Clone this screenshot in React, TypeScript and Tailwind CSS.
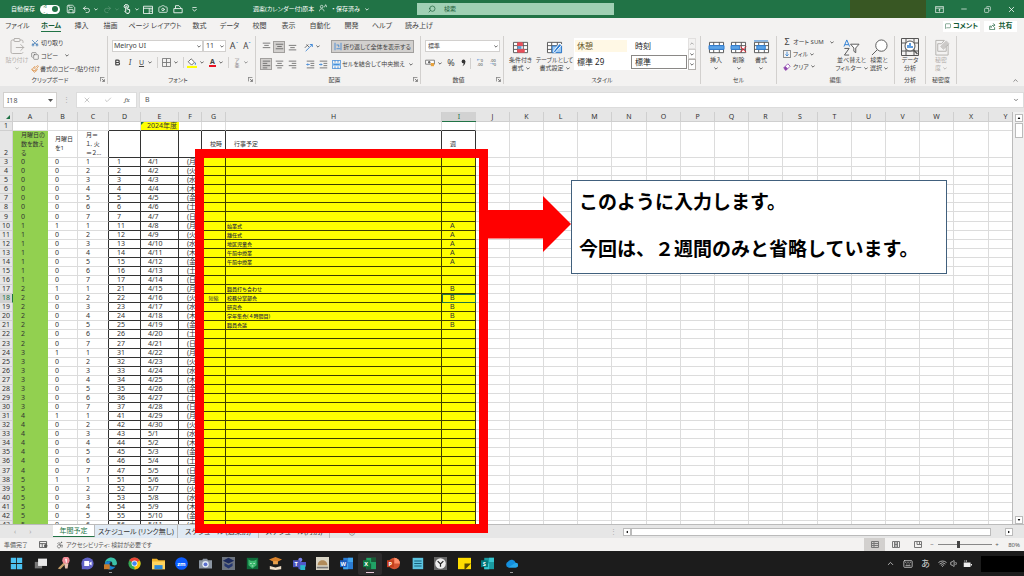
import React from "react";
import {
  Accessibility,
  Bold,
  Camera,
  ChevronDown,
  ChevronUp,
  ClipboardPaste,
  Copy,
  Keyboard,
  MessageSquare,
  Minus,
  Paintbrush,
  Printer,
  Redo2,
  Save,
  Scissors,
  Search,
  Share2,
  Table2,
  Undo2,
  Volume1,
  Wifi,
  X,
  Check,
  Copy as Restore,
} from "lucide-react";

type Kids = { children?: React.ReactNode };

const Caret = ({ className = "" }: { className?: string }) => (
  <svg viewBox="0 0 6 4" className={`h-[3px] w-[4px] shrink-0 ${className}`} aria-hidden="true">
    <path d="M0.5 0.5 3 3 5.5 0.5" fill="none" stroke="currentColor" strokeWidth="1.2" />
  </svg>
);

const IconButton = ({ label, className = "", children }: Kids & { label: string; className?: string }) => (
  <button type="button" aria-label={label} className={`flex shrink-0 items-center justify-center ${className}`}>
    {children}
  </button>
);

/* ---------- title bar ---------- */

function TitleBar() {
  return (
    <header className="flex h-[18px] shrink-0 items-center bg-[#217346] text-[6px] leading-[8px] text-white">
      <label className="flex items-center gap-[5px] pl-[11px]">
        自動保存
        <input type="checkbox" defaultChecked className="peer sr-only" />
        <span className="flex h-[9px] w-[20px] items-center justify-between rounded-full bg-white pr-[2px] pl-[3px] text-[5px] text-[#217346]">
          オン
          <span className="size-[6px] rounded-full bg-[#217346]" />
        </span>
      </label>
      <div className="flex items-center pl-[6px]">
        <IconButton label="上書き保存" className="w-[10px]"><Save size={10} strokeWidth={1.8} /></IconButton>
        <IconButton label="元に戻す" className="ml-[5px] w-[18px] gap-[3px]"><Undo2 size={9} strokeWidth={2} /><Caret /></IconButton>
        <IconButton label="やり直し" className="ml-[3px] w-[18px] gap-[3px] opacity-25"><Redo2 size={9} strokeWidth={2} /><Caret /></IconButton>
        <IconButton label="タッチ/マウス モード" className="ml-[1px] w-[18px] gap-[3px]">
          <svg viewBox="0 0 16 16" className="size-[10px]" fill="none" stroke="currentColor" strokeWidth="1.6">
            <path d="M4 6a3.5 3.5 0 1 1 6 0M6 12V4.5a1 1 0 0 1 2.200 0V8l4 1v3l-1.500 3H7.500L4 11" />
          </svg>
          <Caret />
        </IconButton>
        <IconButton label="テーブル" className="ml-[3px] w-[11px]">
          <svg viewBox="0 0 12 11" className="h-[9px] w-[10px]" fill="none" stroke="currentColor">
            <path d="M.5 1.500h11v9H.5zM.5 4h11M7.500 4v6.500M9 6h1.500M9 8h1.500" />
          </svg>
        </IconButton>
        <IconButton label="カメラ" className="ml-[4px] w-[11px]"><Camera size={10} strokeWidth={1.8} /></IconButton>
        <IconButton label="印刷" className="ml-[4px] w-[11px]">
          <svg viewBox="0 0 12 12" className="size-[10px]" fill="none" stroke="currentColor">
            <path d="M1 5.500h10v5H1zM3 5.500V2h4l2 2v1.500" />
          </svg>
        </IconButton>
        <IconButton label="クイック アクセス ツール バーのカスタマイズ" className="ml-[8px] w-[6px]">
          <svg viewBox="0 0 6 6" className="size-[5px]"><path d="M0.500 0.500h5M0.500 2.500 3 5l2.500-2.500" fill="none" stroke="currentColor" /></svg>
        </IconButton>
      </div>
      <button type="button" className="ml-[54px] flex w-[166px] items-center gap-[5px] pl-[2px] whitespace-nowrap">
        週案(カレンダー付)原本
        <svg viewBox="0 0 12 12" className="-mt-[3px] size-[8px]" fill="none" stroke="currentColor">
          <circle cx="4" cy="4" r="2" /><path d="M0.500 11c0-5 7-5 7 0M8 5l2-4 2 4" />
        </svg>
        <span>• 保存済み</span>
        <Caret />
      </button>
      <label className="flex h-[12px] w-[197px] shrink-0 items-center bg-[#a0d0b4] pl-[11px] text-[#185c37]">
        <Search size={8} strokeWidth={2} className="shrink-0 -scale-x-100" />
        <input type="search" placeholder="検索" aria-label="検索" className="ml-[8px] w-full bg-transparent text-[6px] outline-none placeholder:text-[#185c37]" />
      </label>
      <div className="flex h-full flex-1 items-center justify-end">
        <div className="h-full w-[76px] bg-[#385723]" />
        <div className="flex items-center gap-[15px] pr-[8px] pl-[9px]">
          <IconButton label="リボンの表示オプション" className="w-[9px]">
            <svg viewBox="0 0 12 10" className="h-[7px] w-[9px]" fill="none" stroke="currentColor"><path d="M.5.5h11v9H.5zM.5 3h11M6 8V4.500M4.500 6 6 4.500 7.500 6" /></svg>
          </IconButton>
          <IconButton label="最小化" className="w-[9px]"><Minus size={8} /></IconButton>
          <IconButton label="元に戻す(縮小)" className="w-[9px]"><Restore size={7} className="-scale-x-100" /></IconButton>
          <IconButton label="閉じる" className="w-[9px]"><X size={9} /></IconButton>
        </div>
      </div>
    </header>
  );
}

/* ---------- ribbon tabs ---------- */

const ribbonTabs = [
  { name: "ファイル", width: "w-[35px]" },
  { name: "ホーム", width: "w-[32px]" },
  { name: "挿入", width: "w-[29px]" },
  { name: "描画", width: "w-[29px]" },
  { name: "ページ レイアウト", width: "w-[60px]" },
  { name: "数式", width: "w-[29px]" },
  { name: "データ", width: "w-[31px]" },
  { name: "校閲", width: "w-[29px]" },
  { name: "表示", width: "w-[29px]" },
  { name: "自動化", width: "w-[34px]" },
  { name: "開発", width: "w-[29px]" },
  { name: "ヘルプ", width: "w-[32px]" },
  { name: "読み上げ", width: "w-[42px]" },
];

function RibbonTabs() {
  return (
    <nav className="flex h-[16px] shrink-0 items-center bg-[#f3f2f1] text-[7px] leading-[10px] text-[#444]">
      {ribbonTabs.map((t) => (
        <button
          type="button"
          key={t.name}
          className={`flex shrink-0 justify-center whitespace-nowrap ${t.width} ${t.name === "ホーム" ? "font-bold" : ""}`}
        >
          <span className={t.name === "ホーム" ? "border-b border-[#217346] text-[#185c37]" : "border-b border-transparent"}>{t.name}</span>
        </button>
      ))}
      <div className="ml-auto flex gap-[4px] pr-[7px] font-bold text-[#185c37]">
        <button type="button" className="flex h-[11px] w-[37px] items-center justify-center gap-[2px] bg-white whitespace-nowrap">
          <MessageSquare size={6} />コメント
        </button>
        <button type="button" className="flex h-[11px] w-[33px] items-center justify-center gap-[3px] bg-white whitespace-nowrap">
          <svg viewBox="0 0 10 10" className="size-[7px]" fill="none" stroke="currentColor"><path d="M3 4.500H1v5h7V6M3 7c0-3 2-4 5-4M6 .5 8.500 3 6 5.500" /></svg>共有
        </button>
      </div>
    </nav>
  );
}

/* ---------- ribbon ---------- */

function Group({ title, width, launcher, children }: Kids & { title: string; width: string; launcher?: boolean }) {
  return (
    <section className={`flex shrink-0 flex-col py-[2px] ${width}`}>
      <div className="flex flex-1 flex-col border-r border-[#d2d0ce]">
        <div className="flex h-[39px] items-start">{children}</div>
        <div className="flex h-[9px] items-center">
          <h2 className="flex-1 text-center whitespace-nowrap">{title}</h2>
          {launcher && (
            <IconButton label={`${title}の設定`} className="mr-[2px]">
              <svg viewBox="0 0 8 8" className="size-[5px]" fill="none" stroke="currentColor"><path d="M.5 7V.5H7M3 3l4 4M7 3.500V7H3.500" /></svg>
            </IconButton>
          )}
        </div>
      </div>
    </section>
  );
}

function Big({ lines, width, icon, dim }: { lines: string[]; width: string; icon: React.ReactNode; dim?: boolean }) {
  return (
    <button type="button" className={`flex shrink-0 flex-col items-center pt-[2px] whitespace-nowrap ${width} ${dim ? "text-[#b3b0ad]" : ""}`}>
      <span className="flex h-[18px] items-center">{icon}</span>
      {lines.map((l) => (
        <span key={l} className="flex h-[8px] items-center gap-[2px]">
          {l.replace("▾", "")}
          {l.includes("▾") && <Caret />}
        </span>
      ))}
    </button>
  );
}

const GridIcon = ({ children }: Kids) => (
  <svg viewBox="0 0 18 16" className="h-[15px] w-[17px]" fill="none" stroke="#555">
    <path d="M1.500 2.500h15v11h-15zM1.500 6h15M1.500 10h15M6 2.500v11M12 2.500v11" fill="#fff" />
    {children}
  </svg>
);

const Lines = ({ kind }: { kind: "top" | "mid" | "low" | "left" | "center" | "right" | "out" | "in" }) => {
  const d = {
    top: "M1 1.500h10M3 4.500h6M1 7.500h10",
    mid: "M1 3h10M3 6h6M1 9h10",
    low: "M1 4.500h10M3 7.500h6M1 10.500h10",
    left: "M1 1.500h10M1 4.500h6M1 7.500h10M1 10.500h6",
    center: "M1 1.500h10M3 4.500h6M1 7.500h10M3 10.500h6",
    right: "M1 1.500h10M5 4.500h6M1 7.500h10M5 10.500h6",
    out: "M1 1.500h10M6 4.500h5M6 7.500h5M1 10.500h10",
    in: "M1 1.500h10M6 4.500h5M6 7.500h5M1 10.500h10",
  }[kind];
  return (
    <svg viewBox="0 0 12 12" className="size-[9px]" fill="none" stroke="#555">
      <path d={d} />
      {kind === "out" && <path d="M5 6H1M2.500 4.500 1 6l1.500 1.500" stroke="#2b7cd3" />}
      {kind === "in" && <path d="M0 6h4M2.500 4.500 4 6 2.500 7.500" stroke="#2b7cd3" />}
    </svg>
  );
};

function Clipboard() {
  return (
    <Group title="クリップボード" width="w-[108px]" launcher>
      <button type="button" className="flex w-[31px] flex-col items-center pt-[1px] pl-[3px] text-[#b3b0ad]">
        <ClipboardPaste size={18} strokeWidth={1.3} />
        <span className="mt-[1px] whitespace-nowrap">貼り付け</span>
        <Caret className="mt-[3px]" />
      </button>
      <div className="flex flex-col pt-[1px]">
        <button type="button" className="flex h-[12px] items-center gap-[2px]"><Scissors size={8} className="-rotate-90 text-[#2b6cb0]" />切り取り</button>
        <button type="button" className="flex h-[13px] items-center gap-[2px]"><Copy size={8} strokeWidth={1.5} />コピー<Caret className="ml-[5px]" /></button>
        <button type="button" className="flex h-[13px] items-center gap-[1px] whitespace-nowrap"><Paintbrush size={8} className="text-[#d9822b]" />書式のコピー/貼り付け</button>
      </div>
    </Group>
  );
}

function FontGroup() {
  return (
    <Group title="フォント" width="w-[148px]" launcher>
      <div className="w-full pl-[4px]">
        <div className="flex items-center pt-[4px]">
          <div className="relative h-[12px] w-[91px]">
            <select aria-label="フォント" className="size-full appearance-none border border-[#d2d0ce] bg-white pl-[1px] text-[7px] leading-[10px]"><option>Meiryo UI</option></select>
            <Caret className="absolute top-[5px] right-[2px]" />
          </div>
          <div className="relative h-[12px] w-[23px]">
            <select aria-label="フォント サイズ" className="size-full appearance-none border border-[#d2d0ce] bg-white pl-[2px] text-[7px] leading-[10px]"><option>11</option></select>
            <Caret className="absolute top-[5px] right-[2px]" />
          </div>
          <IconButton label="フォント サイズの拡大" className="ml-[3px] w-[10px] text-[9px] leading-[10px]">A<span className="-mt-[4px] text-[6px] text-[#2b7cd3]">ˆ</span></IconButton>
          <IconButton label="フォント サイズの縮小" className="ml-[3px] w-[10px] text-[8px] leading-[10px]">A<span className="-mt-[4px] text-[6px] text-[#2b7cd3]">ˇ</span></IconButton>
        </div>
        <div className="flex items-center pt-[5px]">
          <IconButton label="太字" className="w-[10px]"><Bold size={7} strokeWidth={4} /></IconButton>
          <IconButton label="斜体" className="ml-[3px] w-[10px] font-serif text-[8px] leading-[10px] italic">I</IconButton>
          <IconButton label="下線" className="ml-[3px] w-[15px] gap-[4px] text-[7px] leading-[10px]"><span className="underline">U</span><Caret /></IconButton>
          <span className="ml-[4px] h-[11px] w-px bg-[#d2d0ce]" />
          <IconButton label="罫線" className="ml-[3px] w-[18px] gap-[3px]">
            <svg viewBox="0 0 10 10" className="size-[9px]" fill="none" stroke="#777"><path d="M.5.5h9v9h-9zM5 .5v9M.5 5h9" /></svg><Caret />
          </IconButton>
          <span className="ml-[4px] h-[11px] w-px bg-[#d2d0ce]" />
          <IconButton label="塗りつぶしの色" className="ml-[2px] w-[18px] gap-[3px]">
            <svg viewBox="0 0 12 12" className="size-[10px]"><path d="m5 1 4 4-3.500 3.500-4-4z" fill="#fff" stroke="#555" /><path d="M10 5c1 2 1 3 0 3s-1-1 0-3" fill="#2b7cd3" /><path d="M0 9.500h12V12H0z" fill="#ff0" /></svg><Caret />
          </IconButton>
          <IconButton label="フォントの色" className="ml-[3px] w-[18px] gap-[3px]">
            <span className="border-b-2 border-[#e81123] px-[1px] text-[7px] leading-[7px] font-bold">A</span><Caret />
          </IconButton>
          <span className="ml-[3px] h-[11px] w-px bg-[#d2d0ce]" />
          <IconButton label="ふりがなの表示" className="ml-[3px] w-[18px] gap-[4px] text-[#777]">
            <span className="text-[5px] leading-[5px]">ア<br />亜</span><Caret />
          </IconButton>
        </div>
      </div>
    </Group>
  );
}

function AlignGroup() {
  const on = "h-[12px] w-[12px] border border-[#a19f9d] bg-[#d2d0ce]";
  const off = "h-[12px] w-[12px]";
  return (
    <Group title="配置" width="w-[165px]" launcher>
      <div className="grid grid-cols-[71px_1fr] gap-y-[5px] pt-[4px] pl-[4px]">
        <div className="flex items-center gap-[1px]">
          <IconButton label="上揃え" className={off}><Lines kind="top" /></IconButton>
          <IconButton label="上下中央揃え" className={on}><Lines kind="mid" /></IconButton>
          <IconButton label="下揃え" className={off}><Lines kind="low" /></IconButton>
          <IconButton label="方向" className="ml-[5px] gap-[2px]">
            <svg viewBox="0 0 12 12" className="size-[10px]" fill="none" stroke="#555"><path d="m2 11 8-8M7 3h3v3" stroke="#2b7cd3" /><path d="m1 7 4-4M3 3l3 3" /></svg><Caret />
          </IconButton>
        </div>
        <button type="button" className="flex h-[13px] w-[83px] items-center justify-center gap-[1px] border border-[#a19f9d] bg-[#d2d0ce] whitespace-nowrap">
          <svg viewBox="0 0 10 12" className="h-[9px] w-[8px]" fill="none" stroke="#2b7cd3"><path d="M1 1v10M3 4h3v3M9 1v10M3 9h5" /></svg>
          折り返して全体を表示する
        </button>
        <div className="flex items-center gap-[1px]">
          <IconButton label="左揃え" className={on}><Lines kind="left" /></IconButton>
          <IconButton label="中央揃え" className={off}><Lines kind="center" /></IconButton>
          <IconButton label="右揃え" className={off}><Lines kind="right" /></IconButton>
          <IconButton label="インデントを減らす" className="ml-[5px] w-[12px]"><Lines kind="out" /></IconButton>
          <IconButton label="インデントを増やす" className="w-[12px]"><Lines kind="in" /></IconButton>
        </div>
        <button type="button" className="flex h-[12px] items-center gap-[1px] pl-[1px] whitespace-nowrap">
          <svg viewBox="0 0 12 12" className="size-[9px]" fill="none" stroke="#2b7cd3"><path d="M.5.5h11v11H.5z" /><path d="M1 4h10v4H1z" fill="#9dc8f0" stroke="none" /><path d="M4 .5v3M8 .5v3M4 8.500v3M8 8.500v3M2 6h8" /></svg>
          セルを結合して中央揃え<Caret className="ml-[3px]" />
        </button>
      </div>
    </Group>
  );
}

function NumberGroup() {
  return (
    <Group title="数値" width="w-[83px]" launcher>
      <div className="w-full pt-[4px] pl-[4px]">
        <div className="relative h-[12px] w-[75px]">
          <select aria-label="表示形式" className="size-full appearance-none border border-[#d2d0ce] bg-white pl-[2px] text-[6px] leading-[10px]"><option>標準</option></select>
          <Caret className="absolute top-[5px] right-[2px]" />
        </div>
        <div className="flex items-center pt-[5px]">
          <IconButton label="通貨表示形式" className="h-[12px] w-[17px] gap-[3px]">
            <svg viewBox="0 0 12 10" className="h-[8px] w-[10px]"><path d="M.5 1.500h11v5H.5z" fill="#fff" stroke="#666" /><circle cx="5" cy="4" r="1.500" fill="#666" /><path d="M7 5h4v4H7z" fill="#e8a33d" /></svg><Caret />
          </IconButton>
          <IconButton label="パーセント" className="ml-[4px] w-[10px] text-[9px] leading-[10px]">%</IconButton>
          <IconButton label="桁区切り" className="ml-[3px] w-[9px]">
            <svg viewBox="0 0 6 10" className="h-[8px] w-[5px]"><circle cx="3" cy="3" r="2.300" fill="#333" /><path d="M5.300 3C5.300 6 4 8 1.500 9 3 7 3.500 6 3 4z" fill="#333" /></svg>
          </IconButton>
          <span className="ml-[2px] h-[11px] w-px bg-[#d2d0ce]" />
          <IconButton label="小数点以下の表示桁数を増やす" className="ml-[4px] w-[10px] text-[4px] leading-[4px]"><span><span className="text-[#2b7cd3]">←</span>0<br />.00</span></IconButton>
          <IconButton label="小数点以下の表示桁数を減らす" className="ml-[3px] w-[10px] text-[4px] leading-[4px]"><span>.00<br /><span className="text-[#2b7cd3]">→</span>0</span></IconButton>
        </div>
      </div>
    </Group>
  );
}

function StyleGroup() {
  return (
    <Group title="スタイル" width="w-[197px]">
      <Big lines={["条件付き", "書式▾"]} width="w-[33px]" icon={
        <GridIcon><path d="M6 3h5v3H6zM6 10h7v3H6z" fill="#e8505b" stroke="#e8505b" /><path d="M6 6.500h4v3H6z" fill="#5b9bd5" stroke="none" /></GridIcon>} />
      <Big lines={["テーブルとして", "書式設定▾"]} width="w-[35px]" icon={
        <GridIcon><path d="M6.500 6.500h10v7h-10z" fill="#9dc8f0" stroke="#2b7cd3" /><path d="m9 14 8-9-3-1-6 8z" fill="#2b7cd3" stroke="#fff" /></GridIcon>} />
      <div className="mt-[2px] ml-[2px] flex h-[32px] text-[8px] leading-[10px] text-[#222]">
        <div className="grid w-[114px] grid-cols-2 items-center bg-white pr-[1px] pl-[1px]">
          <button type="button" className="mr-[4px] h-[12px] bg-[#fff8e5] pl-[2px] text-left text-[#6b5a2a]">休憩</button>
          <button type="button" className="h-[12px] pl-[4px] text-left">時刻</button>
          <button type="button" className="h-[12px] pl-[2px] text-left">標準 29</button>
          <button type="button" className="h-[14px] border border-[#8a8886] pl-[3px] text-left">標準</button>
        </div>
        <div className="flex w-[8px] flex-col text-[#444]">
          <IconButton label="前のスタイル" className="flex-1 border border-[#d2d0ce] opacity-50"><Caret className="-scale-y-100" /></IconButton>
          <IconButton label="次のスタイル" className="flex-1 border border-[#d2d0ce] bg-white"><Caret /></IconButton>
          <IconButton label="スタイルの一覧" className="flex-1 border border-[#b3b0ad] bg-white"><Caret /></IconButton>
        </div>
      </div>
    </Group>
  );
}

function Ribbon() {
  return (
    <div className="flex h-[52px] shrink-0 bg-[#f3f2f1] text-[6px] leading-[8px] text-[#444]">
      <Clipboard />
      <FontGroup />
      <AlignGroup />
      <NumberGroup />
      <StyleGroup />
      <Group title="セル" width="w-[76px]">
        <div className="flex pl-[4px]">
          <Big lines={["挿入", "▾"]} width="w-[22px]" icon={<GridIcon><path d="M1 6h16v4H1z" fill="#5ba3e6" stroke="#2b7cd3" /></GridIcon>} />
          <Big lines={["削除", "▾"]} width="w-[23px]" icon={<GridIcon><path d="M1 6h9v4H1z" fill="#5ba3e6" stroke="#2b7cd3" /><path d="m11 7 6 6M17 7l-6 6" stroke="#e81123" /></GridIcon>} />
          <Big lines={["書式", "▾"]} width="w-[22px]" icon={<GridIcon><path d="M4 6h9v4H4z" fill="#5ba3e6" stroke="#2b7cd3" /><path d="M1 1h15" stroke="#2b7cd3" /></GridIcon>} />
        </div>
      </Group>
      <Group title="編集" width="w-[118px]">
        <div className="flex w-[59px] flex-col pl-[6px]">
          <button type="button" className="flex h-[12px] items-center gap-[2px] whitespace-nowrap"><span className="w-[8px] text-[9px]">Σ</span>オート SUM<Caret className="ml-[4px]" /></button>
          <button type="button" className="flex h-[12px] items-center gap-[2px]">
            <svg viewBox="0 0 10 10" className="size-[8px]" fill="none" stroke="#2b7cd3"><path d="M.5.500h9v9h-9z" stroke="#666" /><path d="M5 2v5.500M3 5.500l2 2 2-2" /></svg>フィル<Caret />
          </button>
          <button type="button" className="flex h-[13px] items-center gap-[2px]">
            <svg viewBox="0 0 10 10" className="size-[8px]"><path d="m1 6 5-5 3 3-5 5H3z" fill="#fff" stroke="#8e44ad" /><path d="m1 6 2-2 3 3-2 2H3z" fill="#8e44ad" /></svg>クリア<Caret />
          </button>
        </div>
        <Big lines={["並べ替えと", "フィルター▾"]} width="w-[31px]" icon={
          <svg viewBox="0 0 18 18" className="size-[17px]" fill="none"><path d="m1 8 3-7 3 7M2 6h4" stroke="#2b7cd3" /><path d="M1.500 10h5l-5 7h5" stroke="#555" /><path d="M8 5.500h9l-3.500 4v5l-2-1.500V9.500z" fill="#fff" stroke="#555" /></svg>} />
        <Big lines={["検索と", "選択▾"]} width="w-[24px]" icon={
          <svg viewBox="0 0 18 18" className="size-[17px]" fill="none" stroke="#555"><circle cx="11" cy="7" r="6" fill="#fff" /><path d="M6.500 11.500 1 17" /></svg>} />
      </Group>
      <Group title="分析" width="w-[31px]">
        <Big lines={["データ", "分析"]} width="w-[30px]" icon={
          <svg viewBox="0 0 18 18" className="size-[18px]" fill="none" stroke="#555"><path d="M.5.5h17v17H.5zM.5 5h17M.5 13h17M5 .500v17M13 .500v17" /><circle cx="9" cy="8" r="5" fill="#fff" /><path d="M7 10V7M9 10V5M11 10V8" stroke="#2b7cd3" strokeWidth="1.500" /><path d="m12.500 12 4 4" strokeWidth="1.500" /></svg>} />
      </Group>
      <Group title="秘密度" width="w-[31px]">
        <Big dim lines={["秘密", "度▾"]} width="w-[30px]" icon={
          <svg viewBox="0 0 18 18" className="size-[17px]" fill="none" stroke="currentColor"><path d="M3 1.500h9L9 5H5v8h9V8l2-2v11H3z" /><path d="m8 8 6-6 3 3-6 6z" fill="currentColor" opacity=".6" /></svg>} />
      </Group>
      <div className="flex flex-1 items-end justify-end pr-[5px] pb-[2px]">
        <IconButton label="リボンを折りたたむ"><ChevronUp size={7} /></IconButton>
      </div>
    </div>
  );
}

/* ---------- formula bar ---------- */

function FormulaBar() {
  return (
    <div className="flex shrink-0 items-center bg-[#e6e6e6] pt-[6px] pb-[4px] pl-[3px] text-[7px] text-[#555]">
      <div className="relative h-[16px] w-[54px]">
        <input aria-label="名前ボックス" defaultValue="I18" className="size-full border border-[#d2d0ce] bg-white pl-[3px]" />
        <svg viewBox="0 0 5 3" className="absolute top-[7px] right-[4px] h-[3px] w-[5px]" fill="currentColor"><path d="M0 0h5L2.500 3z" /></svg>
      </div>
      <span className="mx-[6px] text-[#aaa]">⋮</span>
      <div className="flex h-[16px] w-[61px] items-center justify-around border border-[#dcdcdc] bg-white">
        <IconButton label="キャンセル"><X size={8} className="text-[#aaa]" /></IconButton>
        <IconButton label="入力"><Check size={8} className="text-[#aaa]" /></IconButton>
        <IconButton label="関数の挿入" className="font-serif italic">fx</IconButton>
      </div>
      <label className="ml-[2px] flex h-[16px] flex-1 items-center border border-[#dcdcdc] bg-white pr-[4px]">
        <input aria-label="数式バー" defaultValue="B" className="flex-1 bg-transparent pl-[5px] outline-none" />
        <ChevronDown size={6} strokeWidth={3} />
      </label>
    </div>
  );
}

/* ---------- worksheet ---------- */

const columns: [string, string][] = [
  ["A", "w-[35px]"], ["B", "w-[30px]"], ["C", "w-[31px]"], ["D", "w-[32px]"], ["E", "w-[38px]"],
  ["F", "w-[23px]"], ["G", "w-[24px]"], ["H", "w-[216px]"], ["I", "w-[34px]"], ["J", "w-[34px]"],
  ["K", "w-[34px]"], ["L", "w-[34px]"], ["M", "w-[34px]"], ["N", "w-[35px]"], ["O", "w-[34px]"],
  ["P", "w-[34px]"], ["Q", "w-[34px]"], ["R", "w-[34px]"], ["S", "w-[35px]"], ["T", "w-[34px]"],
  ["U", "w-[34px]"], ["V", "w-[34px]"], ["W", "w-[34px]"], ["X", "w-[35px]"], ["Y", "w-[34px]"],
];
const blanks = columns.slice(9).map(([name]) => name);
const weekdays = ["月", "火", "水", "木", "金", "土", "日"];

const events: Record<number, { text: string; week: string; mode?: string }> = {
  10: { text: "始業式", week: "A" },
  11: { text: "離任式", week: "A" },
  12: { text: "地区児童会", week: "A" },
  13: { text: "午前中授業", week: "A" },
  14: { text: "午前中授業", week: "A" },
  17: { text: "職員打ち合わせ", week: "B" },
  18: { text: "校務分掌部会", week: "B", mode: "短縮" },
  19: { text: "研究会", week: "B" },
  20: { text: "学年集会(４時間目)", week: "B" },
  21: { text: "職員会議", week: "B" },
};

const light = "border-r border-b border-[#dcdcdc] p-0";
const dark = "border-r border-b border-[#333] p-0";
const yellow = "border-r border-b border-[#3d3d00] bg-[#ff0] p-0";
const yellowSelected = "border-r border-b border-[#217346] bg-[#ff0] p-0 outline outline-[#217346] -outline-offset-1";
const green = "border-b border-[#92d050] bg-[#92d050] p-0";
const head = "border-r border-b border-[#cfcfcf] p-0 font-normal";

function DayRow({ row }: { row: number }) {
  const k = row - 3;
  const week = Math.floor(k / 7);
  const day = k % 7;
  const date = k < 30 ? `4/${k + 1}` : `5/${k - 29}`;
  const ev = events[row];
  const selected = row === 18;
  return (
    <tr className={row % 14 === 9 ? "h-[10px]" : "h-[9px]"}>
      <th scope="row" className={selected ? "border-r border-b border-r-[#217346] border-b-[#cfcfcf] bg-[#d2d2d2] p-0 font-normal text-[#217346]" : `${head} bg-[#e6e6e6]`}>{row}</th>
      <td className={`${green} pl-[8px]`}>{week}</td>
      <td className={`${light} pl-[7px]`}>{day === 0 && week > 0 ? 1 : 0}</td>
      <td className="border-r border-b border-r-[#333] border-b-[#dcdcdc] p-0 pl-[8px]">{day + 1}</td>
      <td className={`${dark} pl-[8px]`}>{week * 10 + day + 1}</td>
      <td className={`${dark} pl-[7px]`}>{date}</td>
      <td className={`${dark} overflow-hidden pl-[8px] whitespace-nowrap`}>({weekdays[day]})</td>
      <td className={`${yellow} text-center text-[5px]`}>{ev?.mode}</td>
      <td className={`${yellow} pl-[1px] text-[5px] font-medium [font-feature-settings:normal]`}>{ev?.text}</td>
      <td className={`${selected ? yellowSelected : yellow} pl-[8px] font-['Liberation_Sans',sans-serif]`}>{ev?.week}</td>
      {blanks.map((c) => <td key={c} className={light} />)}
    </tr>
  );
}

function Sheet() {
  const rows = Array.from({ length: 41 }, (_, i) => i + 3);
  return (
    <div className="flex min-h-0 flex-1 bg-[#e6e6e6]">
      <div className="min-w-0 flex-1 overflow-hidden border-r border-[#bbb] bg-white">
        <table className="w-[1023px] table-fixed border-separate border-spacing-0 text-left text-[7px] leading-[8px] text-[#333]">
          <colgroup>
            <col className="w-[13px]" />
            {columns.map(([name, width]) => <col key={name} className={width} />)}
          </colgroup>
          <thead>
            <tr className="h-[10px] bg-[#e6e6e6] text-center">
              <th className={head}>
                <svg viewBox="0 0 6 6" className="mr-[2px] ml-auto size-[4px]"><path d="M6 0v6H0z" fill="#217346" /></svg>
              </th>
              {columns.map(([name]) => (
                <th key={name} scope="col" className={name === "I" ? "border-b border-[#217346] bg-[#d2d2d2] p-0 font-normal text-[#217346]" : head}>{name}</th>
              ))}
            </tr>
          </thead>
          <tbody className="[&_th]:text-center">
            <tr className="h-[9px]">
              <th scope="row" className={`${head} bg-[#e6e6e6]`}>1</th>
              <td className={light} /><td className={light} /><td className={light} />
              <td className="border-r border-b border-r-[#dcdcdc] border-b-[#333] p-0" />
              <td className="border-b border-[#333] bg-[#ff0] p-0 pr-[2px]">
                <div className="flex h-[8px] items-start justify-between whitespace-nowrap">
                  <svg viewBox="0 0 3 3" className="size-[3px]"><path d="M0 0h3L0 3z" fill="#217346" /></svg>
                  2024年度
                </div>
              </td>
              {["F", "G", "H", "I"].map((c) => <td key={c} className="border-r border-b border-r-[#dcdcdc] border-b-[#333] p-0" />)}
              {blanks.map((c) => <td key={c} className={light} />)}
            </tr>
            <tr className="h-[27px] text-[6px] leading-[9px]">
              <th scope="row" className={`${head} bg-[#e6e6e6] align-bottom text-[7px]`}>2</th>
              <td className={`${green} pl-[8px] whitespace-nowrap`}><div className="h-[26px]">月曜日の<br />数を数え<br />る</div></td>
              <td className={`${light} pl-[7px] whitespace-nowrap`}>月曜日<br />を1</td>
              <td className="border-r border-b border-r-[#333] border-b-[#dcdcdc] p-0 pl-[8px] whitespace-nowrap"><div className="h-[26px]">月＝<br />１, 火<br />＝２…</div></td>
              <td className={dark} /><td className={dark} /><td className={dark} />
              <td className={`${dark} pl-[8px] whitespace-nowrap`}>校時</td>
              <td className={`${dark} pl-[8px]`}>行事予定</td>
              <td className={`${dark} pl-[8px]`}>週</td>
              {blanks.map((c) => <td key={c} className={light} />)}
            </tr>
            {rows.map((r) => <DayRow key={r} row={r} />)}
          </tbody>
        </table>
      </div>
      <div className="flex w-[11px] shrink-0 flex-col items-center bg-[#f0f0f0] pt-[2px] text-[#333]">
        <IconButton label="上へスクロール" className="size-[8px] border border-[#bbb] bg-white"><svg viewBox="0 0 4 3" className="h-[2px] w-[4px]"><path d="m0 3 2-3 2 3z" /></svg></IconButton>
        <div className="mt-[1px] h-[15px] w-[8px] border border-[#bbb] bg-white" />
        <IconButton label="下へスクロール" className="mt-auto size-[8px] border border-[#bbb] bg-white"><svg viewBox="0 0 4 3" className="h-[2px] w-[4px]"><path d="m0 0 2 3 2-3z" /></svg></IconButton>
      </div>
    </div>
  );
}

/* ---------- sheet tabs and status bar ---------- */

function SheetTabs() {
  const tab = "flex shrink-0 items-center justify-center border-r border-[#bbb] whitespace-nowrap";
  return (
    <div className="flex h-[14px] shrink-0 border-t border-[#bbb] bg-[#e6e6e6] text-[7px] leading-[10px] text-[#333]">
      <div className="flex w-[53px] items-center gap-[13px] pl-[14px] text-[#aaa]"><span>‹</span><span>›</span></div>
      <button type="button" className={`${tab} mb-[1px] w-[42px] border-b border-b-[#217346] bg-white text-[#217346]`}>年間予定</button>
      <button type="button" className={`${tab} w-[83px] bg-[#e0eaf4]`}>スケジュール (リンク無し)</button>
      <button type="button" className={`${tab} w-[81px] bg-[#e0eaf4]`}>スケジュール (週案別)</button>
      <button type="button" className={`${tab} w-[71px]`}>スケジュール(月別)</button>
      <IconButton label="新しいシート" className="ml-[18px] text-[8px] text-[#777]">⊕</IconButton>
      <div className="ml-auto flex items-center pr-[11px] text-[#222]">
        <span className="mr-[6px] text-[#aaa]">⋮</span>
        <IconButton label="左へスクロール" className="size-[8px] border border-[#bbb] bg-white"><svg viewBox="0 0 3 4" className="h-[4px] w-[2px]"><path d="M3 0v4L0 2z" /></svg></IconButton>
        <div className="h-[8px] w-[360px] border border-[#bbb] bg-white" />
        <IconButton label="右へスクロール" className="ml-[14px] size-[8px] border border-[#bbb] bg-white"><svg viewBox="0 0 3 4" className="h-[4px] w-[2px]"><path d="M0 0v4l3-2z" /></svg></IconButton>
      </div>
    </div>
  );
}

function StatusBar() {
  return (
    <footer className="flex h-[13px] shrink-0 items-center bg-[#f3f2f1] pl-[4px] text-[6px] leading-[8px] text-[#555]">
      <span className="w-[35px]">準備完了</span>
      <IconButton label="マクロの記録"><svg viewBox="0 0 10 8" className="h-[7px] w-[9px]" fill="none" stroke="#555"><path d="M.5.500h8v7h-8zM.5 3h8M3.500 3v4" /><circle cx="7.500" cy="5.500" r="1.500" fill="#555" /></svg></IconButton>
      <button type="button" className="ml-[8px] flex items-center gap-[2px] whitespace-nowrap"><Accessibility size={8} />アクセシビリティ: 検討が必要です</button>
      <div className="ml-auto flex h-full items-center pr-[4px]">
        <IconButton label="標準" className="h-full w-[21px] bg-[#d2d0ce]"><svg viewBox="0 0 8 7" className="h-[7px] w-[8px]" fill="none" stroke="#777"><path d="M.5.5h7v6h-7zM.5 2.500h7M.5 4.500h7M3 .5v6" /></svg></IconButton>
        <IconButton label="ページ レイアウト" className="w-[22px]"><svg viewBox="0 0 8 7" className="h-[7px] w-[8px]" fill="none" stroke="#777"><path d="M.5.5h7v6h-7zM2.500 2h3M2.500 3.500h3M2.500 5h3M2.500 0v7M5.500 0v7" /></svg></IconButton>
        <IconButton label="改ページ プレビュー" className="w-[21px]"><svg viewBox="0 0 8 7" className="h-[7px] w-[8px]" fill="none" stroke="#777"><path d="M.5.5h7v6h-7zM3 .5v3h4M5.500.5v3" /></svg></IconButton>
        <IconButton label="縮小" className="w-[8px]">−</IconButton>
        <input
          type="range"
          aria-label="ズーム"
          min={10}
          max={150}
          defaultValue={63}
          className="mx-[2px] h-[8px] w-[54px] appearance-none bg-transparent [&::-webkit-slider-runnable-track]:h-px [&::-webkit-slider-runnable-track]:bg-[#888] [&::-webkit-slider-thumb]:-mt-[3px] [&::-webkit-slider-thumb]:h-[7px] [&::-webkit-slider-thumb]:w-[3px] [&::-webkit-slider-thumb]:appearance-none [&::-webkit-slider-thumb]:bg-[#444]"
        />
        <IconButton label="拡大" className="w-[6px]">+</IconButton>
        <span className="w-[20px] text-right">80%</span>
      </div>
    </footer>
  );
}

/* ---------- taskbar ---------- */

const Letter = ({ children }: { children: React.ReactNode }) => (
  <text x="4" y="11" fontSize="7" fontWeight="bold" fill="#fff" textAnchor="middle">{children}</text>
);

const Office = ({ base, mid, tag, letter }: { base: string; mid: string; tag: string; letter: string }) => (
  <>
    <path d="M4 1h12v14H4z" fill={base} />
    <path d="M10 1h6v5h-6zM4 8h6v7H4z" fill={mid} />
    <path d="M0 4h8.500v8.500H0z" fill={tag} />
    <Letter>{letter}</Letter>
  </>
);

const apps: [string, React.ReactNode][] = [
  ["スタート", <path d="M1 1h6.500v6.500H1zM8.500 1H15v6.500H8.500zM1 8.500h6.500V15H1zM8.500 8.500H15V15H8.500z" fill="#4cc2f1" />],
  ["タスク ビュー", <><path d="M1 6h9v8H1z" fill="#777" /><path d="M5 2h11v9H5z" fill="#e8e8e8" /></>],
  ["ウィジェット", <><path d="m1 14 8-8 2 2-7 7z" fill="#c9a06a" /><circle cx="11" cy="4" r="4.500" fill="#f08a94" /><path d="M9 8h5l-1 6h-3z" fill="#e8c0b0" /><path d="M10 2h2v5h-1z" fill="#fff" /></>],
  ["チャット", <><circle cx="8" cy="8" r="7.500" fill="#6264c7" /><path d="M1 15V9l6 6z" fill="#6264c7" /><path d="M4 5h6v6H4zM10.500 7.500 13 5.500v5l-2.500-2z" fill="#fff" /></>],
  ["Edge", <><path d="M1 9C1 3 5 .500 9 .500S16 4 16 8c0 3-5 3-6 1 1-2-1-4-4-4S2 7 1 9z" fill="#3bc1a8" /><path d="M1 9c0-4 6-5 8-3-4 1-3 7 5 6-4 6-13 4-13-3z" fill="#1b7fd0" /><path d="M0 9h7v6H0z" fill="#c97b2b" /></>],
  ["Chrome", <><circle cx="8" cy="8" r="7.500" fill="#34a853" /><path d="M8 8 1.500 4.300A7.500 7.500 0 0 1 14.500 4.300z" fill="#ea4335" /><path d="M8 8l6.500-3.700A7.500 7.500 0 0 1 8 15.500z" fill="#fbbc04" /><circle cx="8" cy="8" r="3.600" fill="#fff" /><circle cx="8" cy="8" r="2.800" fill="#4285f4" /></>],
  ["エクスプローラー", <><path d="M0 2h6l2 2h8v11H0z" fill="#f0b429" /><path d="M0 5.500h16V15H0z" fill="#ffd45e" /><path d="M3 10h10v5H3z" fill="#2b88d8" /></>],
  ["Zoom", <><circle cx="8" cy="8" r="7.800" fill="#0b5cff" /><text x="8" y="10.500" fontSize="7" fontWeight="bold" fill="#fff" textAnchor="middle">zm</text></>],
  ["カメラ", <><path d="M0 4h4l1-2h5l1 2h5v10H0z" fill="#8c96a3" /><circle cx="8" cy="9" r="4" fill="#dfe7f5" /><circle cx="8" cy="9" r="2.300" fill="#5a6fd0" /></>],
  ["教材", <><path d="M0 0h16v16H0z" fill="#6d7480" /><path d="m8 1 7 3.500L8 8 1 4.500z" fill="#1c2a5c" /><path d="M3 7.500 8 10l5-2.500V11l-5 3-5-3z" fill="#24366f" /></>],
  ["Cat", <><path d="M1 1h14v14H1z" fill="#0f6b3a" /><path d="m3 3 3 1.500h4L13 3v7l-5 4-5-4z" fill="#3dba6f" /><path d="M5 8h2M9 8h2M7 11h2" stroke="#c8f0d8" /></>],
  ["学習ポータル", <><path d="m8 0 8 3-8 4-8-4z" fill="#d9822b" /><path d="M5 5h6v4H5z" fill="#e8a04c" /><path d="m1 11 7 2 7-2v4l-7 1-7-1z" fill="#f0dfc8" /></>],
  ["Teams", <><circle cx="9" cy="3.500" r="2.500" fill="#7b83eb" /><path d="M5 6h11v5l-3 4H7z" fill="#5059c9" /><path d="M0 4h8.500v8.500H0z" fill="#4b53bc" /><Letter>T</Letter><path d="M9 10h6v6H9z" fill="#28b8c8" /></>],
  ["画像", <><path d="M0 0h16v16H0z" fill="#d9d4c5" /><path d="M2 10c0-8 12-8 12 0z" fill="#b08b5a" /><path d="M1 12h14v2H1z" fill="#777" /></>],
  ["Word", <Office base="#2b7cd3" mid="#41a5ee" tag="#185abd" letter="W" />],
  ["Excel", <Office base="#21a366" mid="#185c37" tag="#107c41" letter="X" />],
  ["PowerPoint", <><circle cx="9" cy="8" r="7" fill="#d35230" /><path d="M9 1a7 7 0 0 1 7 7H9z" fill="#ff8f6b" /><path d="M0 4h8.500v8.500H0z" fill="#c43e1c" /><Letter>P</Letter></>],
  ["メモ帳", <><path d="M2 1h13v14H2z" fill="#5cc4e0" /><path d="M4 5h9M4 8h9M4 11h9" stroke="#16607a" strokeWidth="1.300" /></>],
  ["時計", <><path d="M0 0h16v16H0z" fill="#666" /><circle cx="8" cy="8" r="6.500" fill="#eee" /><path d="M4.500 5 8 8.500 11.500 5M8 8.500V12" fill="none" stroke="#222" strokeWidth="1.500" /></>],
  ["付箋", <><path d="M0 1h16v14H0z" fill="#ffdd00" /><path d="M8 8h8l-7 7H8z" fill="#5a4a00" /></>],
  ["Sway", <Office base="#1a9ba1" mid="#37c6d0" tag="#03787c" letter="S" />],
  ["OneDrive", <><path d="M4 13a4 4 0 0 1 0-7.500A5 5 0 0 1 13 7a3 3 0 0 1 0 6z" fill="#1490df" /><path d="M4 13 13 7a3 3 0 0 1 0 6z" fill="#28a8ea" /></>],
];

function Taskbar() {
  return (
    <div className="flex h-[25px] shrink-0 items-center bg-[#1c1c1c] pl-[5px] text-[#ddd]">
      <div className="flex h-full w-[518px] items-center">
        {apps.map(([name, art]) => (
          <button
            type="button"
            key={name}
            aria-label={name}
            className={`flex h-[22px] flex-1 flex-col items-center justify-center rounded-xs ${name === "Excel" ? "bg-[#2d2b2c]" : ""}`}
          >
            <svg viewBox="0 0 16 16" className="mt-[2px] size-[13px]">{art}</svg>
            <span className={`mt-[2px] h-px ${name === "Excel" ? "w-[8px] bg-[#e8c8d8]" : name === "Edge" || name === "OneDrive" ? "w-[3px] bg-[#999]" : ""}`} />
          </button>
        ))}
      </div>
      <div className="ml-auto flex items-center">
        <ChevronUp size={9} />
        <Keyboard size={10} strokeWidth={1.800} className="ml-[8px]" />
        <span className="ml-[8px] text-[9px] leading-[12px]">あ</span>
        <Wifi size={9} className="ml-[8px]" />
        <Volume1 size={9} className="ml-[3px]" />
        <svg viewBox="0 0 12 10" className="ml-[4px] h-[8px] w-[9px]" fill="#eee"><path d="M1 3h9v6H1zM10.500 5H12v2h-1.500zM2 0h1v2H2zM4 0h1v2H4z" /></svg>
      </div>
      <div className="ml-[9px] h-[16px] w-[43px] bg-black" />
    </div>
  );
}

/* ---------- annotation over the sheet ---------- */

function Annotation() {
  return (
    <>
      <div className="pointer-events-none absolute top-[149px] left-[195px] h-[384px] w-[293px] border-9 border-[#f00]" />
      <svg viewBox="0 0 84 56" className="pointer-events-none absolute top-[196px] left-[487px] h-[56px] w-[84px]" aria-hidden="true">
        <path d="M0 14h56V0l28 28-28 28V42.500H0z" fill="#f00" />
      </svg>
      <aside className="absolute top-[180px] left-[571px] h-[94px] w-[376px] border border-[#41607d] bg-white pt-[9px] pl-[7px] text-[19px] leading-[24px] font-bold whitespace-nowrap text-black [font-feature-settings:normal]">
        <p>このように入力します。</p>
        <p className="mt-[23px]">今回は、２週間のみと省略しています。</p>
      </aside>
    </>
  );
}

export default function App() {
  return (
    <main
      lang="ja"
      className="relative flex h-screen flex-col overflow-hidden bg-[#e6e6e6] font-['Noto_Sans','Noto_Sans_CJK_JP',sans-serif] [font-feature-settings:'palt']"
    >
      <TitleBar />
      <RibbonTabs />
      <Ribbon />
      <FormulaBar />
      <Sheet />
      <SheetTabs />
      <StatusBar />
      <Taskbar />
      <Annotation />
    </main>
  );
}
